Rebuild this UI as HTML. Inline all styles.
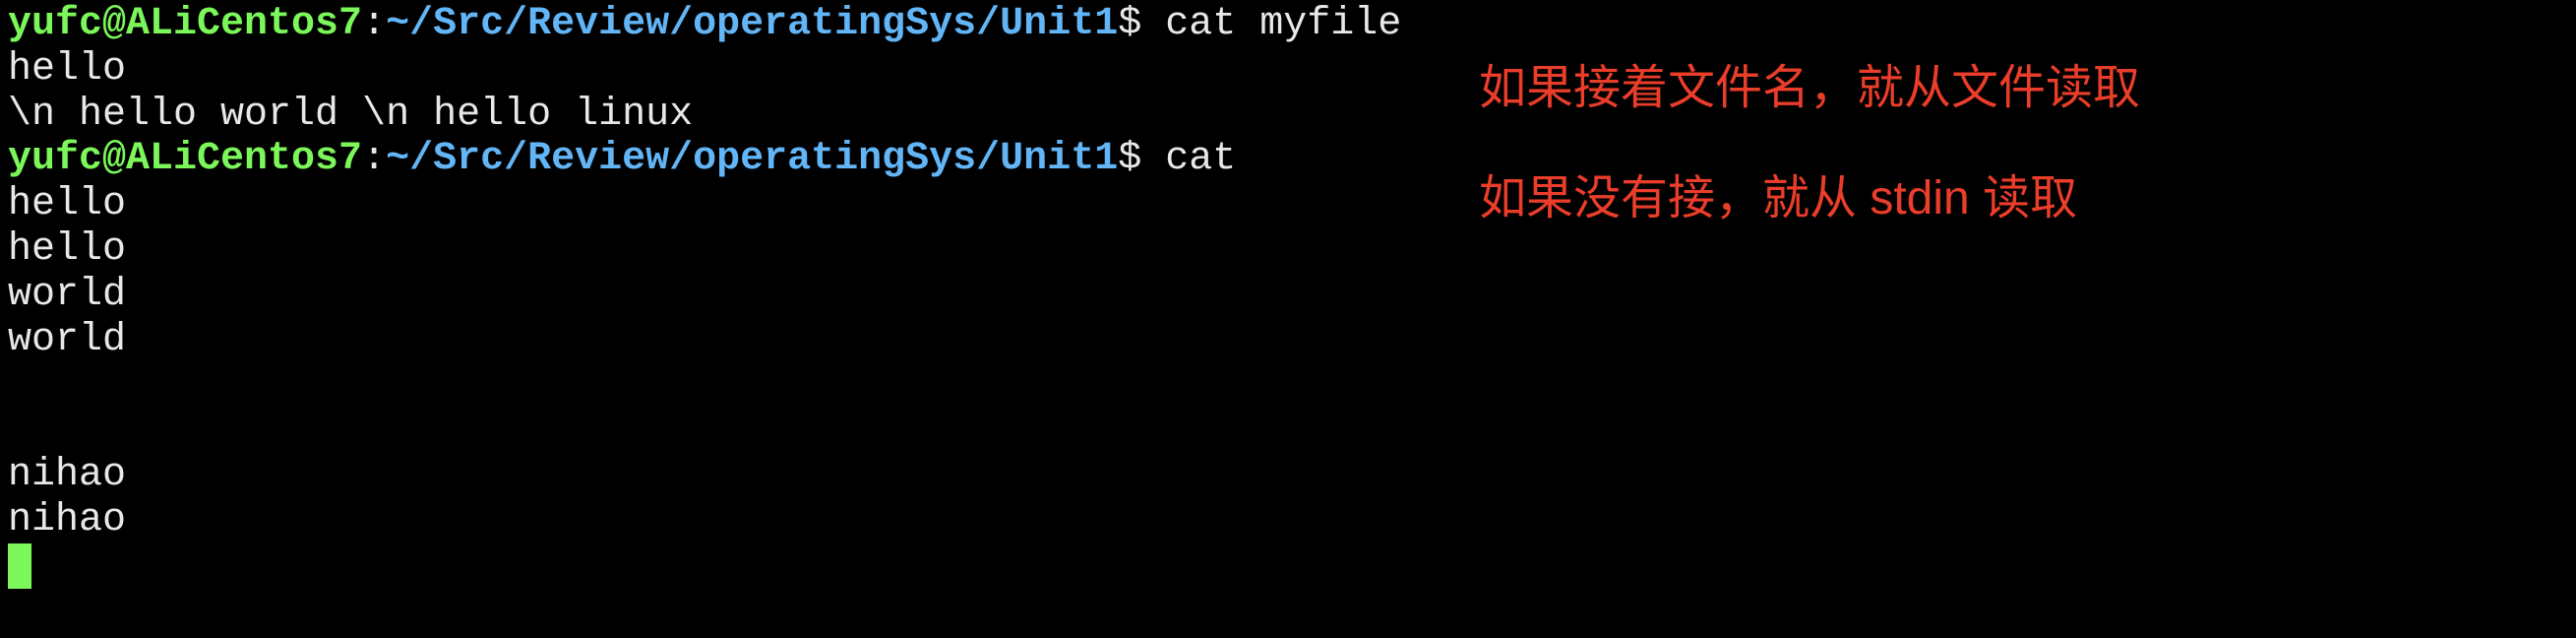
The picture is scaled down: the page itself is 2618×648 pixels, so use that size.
<!DOCTYPE html>
<html><head><meta charset="utf-8"><style>
html,body{margin:0;padding:0;background:#000;width:2618px;height:648px;overflow:hidden}
pre{position:absolute;left:8px;top:2px;margin:0;font-family:"Liberation Mono",monospace;font-size:40px;line-height:45.8px;color:#e8e8e8}
.g{color:#7bf75a;font-weight:bold}.b{color:#62b5f6;font-weight:bold}
.cur{display:inline-block;width:24px;height:46px;background:#7bf75a;vertical-align:top}
.note{position:absolute;left:1503px;font-family:"Liberation Sans","Noto Sans CJK SC",sans-serif;font-size:48px;color:#ea3d2a;line-height:1;white-space:nowrap}
</style></head><body>
<pre><span class="g">yufc@ALiCentos7</span>:<span class="b">~/Src/Review/operatingSys/Unit1</span>$ cat myfile
hello
\n hello world \n hello linux
<span class="g">yufc@ALiCentos7</span>:<span class="b">~/Src/Review/operatingSys/Unit1</span>$ cat
hello
hello
world
world


nihao
nihao
<span class="cur"></span></pre>
<div class="note" style="top:66px">如果接着文件名，就从文件读取</div>
<div class="note" style="top:178px">如果没有接，就从 stdin 读取</div>
</body></html>
